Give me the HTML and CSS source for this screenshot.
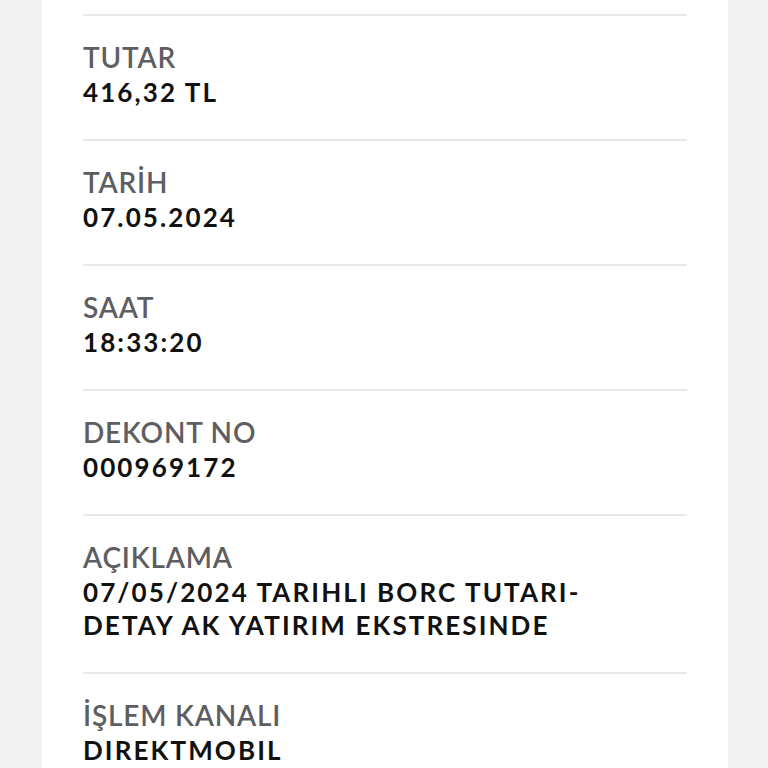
FILE: index.html
```html
<!DOCTYPE html>
<html lang="tr">
<head>
    <meta charset="utf-8">
    <title>İşlem Detayı</title>
    <link rel="stylesheet" href="styles.css">
</head>
<body>

    <div class="card">
        <div class="card-top"></div>

        <div class="row">
            <div class="label">TUTAR</div>
            <div class="value">416,32 TL</div>
        </div>

        <div class="row">
            <div class="label">TARİH</div>
            <div class="value">07.05.2024</div>
        </div>

        <div class="row">
            <div class="label">SAAT</div>
            <div class="value">18:33:20</div>
        </div>

        <div class="row">
            <div class="label">DEKONT NO</div>
            <div class="value">000969172</div>
        </div>

        <div class="row">
            <div class="label">AÇIKLAMA</div>
            <div class="value">07/05/2024 TARIHLI BORC TUTARI-<br>DETAY AK YATIRIM EKSTRESINDE</div>
        </div>

        <div class="row">
            <div class="label">İŞLEM KANALI</div>
            <div class="value">DIREKTMOBIL</div>
        </div>
    </div>

</body>
</html>
```
FILE: styles.css
```css
* {
    box-sizing: border-box;
}

body {
    margin: 0;
    background-color: #f2f2f2;
    font-family: Lato, "Open Sans", sans-serif;
}

/* White detail sheet */
.card {
    width: 686px;
    margin-left: 42px;
    padding: 0 41px;
    background-color: #fff;
}

.card-top {
    height: 14px;
}

/* One label / value pair */
.row {
    border-top: 2px solid #e8e8e8;
    padding: 24px 0 30px;
}

.label {
    font-size: 28px;
    line-height: 34px;
    font-weight: 600;
    letter-spacing: 0.8px;
    color: #5e5e62;
}

.value {
    margin-top: 2px;
    font-size: 26px;
    line-height: 33px;
    font-weight: 700;
    letter-spacing: 2.1px;
    color: #111;
}
```
